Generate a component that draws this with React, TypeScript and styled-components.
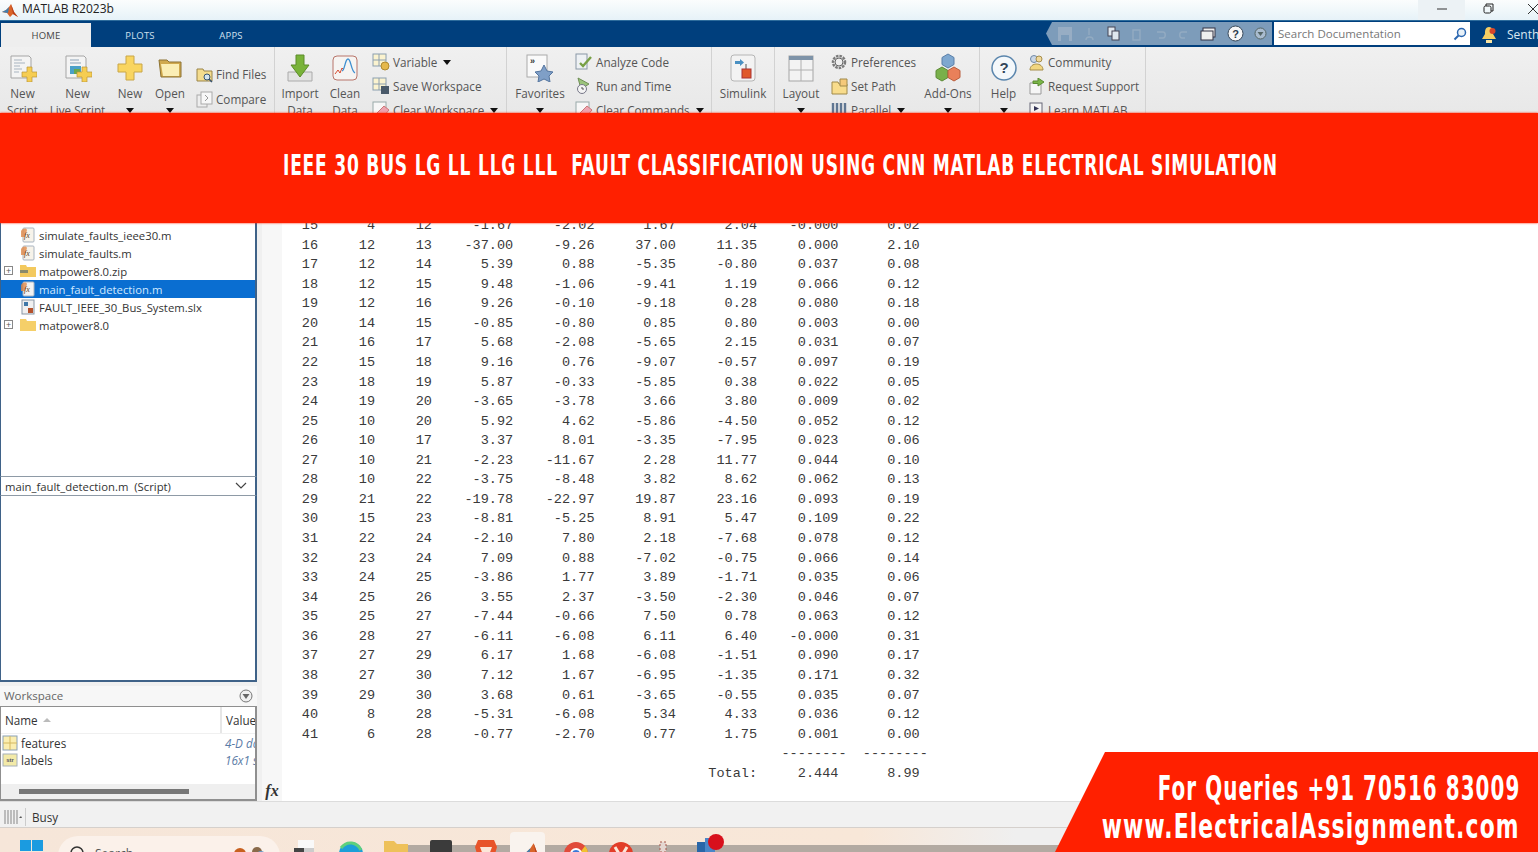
import React from "react";
import styled, { createGlobalStyle } from "styled-components";

const Global = createGlobalStyle`
  html, body { margin: 0; padding: 0; background: #f0f0f0; }
  #root { width: 1538px; height: 852px; overflow: hidden; }
  * { box-sizing: border-box; }
`;

const UI = `"Open Sans", "Noto Sans", sans-serif`;

const Page = styled.div`
  position: relative;
  width: 1538px;
  height: 852px;
  overflow: hidden;
  display: flex;
  flex-direction: column;
  font-family: ${UI};
  background: #f0f0f0;
`;

/* title bar */
const TitleBar = styled.div`
  height: 20px;
  flex: none;
  display: flex;
  align-items: center;
  padding-left: 2px;
  background: linear-gradient(#fbfdfd, #e6f2f8);
  color: #222;
  font-size: 12px;
`;
const TitleText = styled.span`
  margin: 0 0 3px 4px;
  flex: 1;
`;
const WinButton = styled.div<{ $w: number; $shade?: boolean; $out?: number }>`
  width: ${(p) => p.$w}px;
  height: 20px;
  flex: none;
  margin-right: ${(p) => -(p.$out || 0)}px;
  padding-bottom: 3px;
  display: flex;
  align-items: center;
  justify-content: center;
  background: ${(p) => (p.$shade ? "#ecf2f5" : "transparent")};
`;

/* tab strip */
const TabStrip = styled.div`
  height: 27px;
  flex: none;
  display: flex;
  align-items: flex-end;
  background: #003f7d;
  border-top: 1px solid #2d6c9c;
  padding-left: 1px;
`;
const Tab = styled.div<{ $active?: boolean; $w: number }>`
  width: ${(p) => p.$w}px;
  height: 24px;
  display: flex;
  align-items: center;
  justify-content: center;
  font-size: 9.5px;
  letter-spacing: 0.2px;
  color: ${(p) => (p.$active ? "#444" : "#cfe0ee")};
  background: ${(p) => (p.$active ? "#eeeeee" : "transparent")};
`;
const QuickBar = styled.div`
  margin-left: auto;
  height: 23px;
  margin-bottom: 2px;
  width: 226px;
  display: flex;
  align-items: center;
  gap: 10.4px;
  padding-left: 11px;
  background: #7d9cba;
  clip-path: polygon(6px 0, 100% 0, 100% 100%, 6px 100%, 0 50%);
`;
const SearchBox = styled.div`
  width: 196px;
  height: 23px;
  margin: 0 0 2px 2px;
  background: #fff;
  color: #777;
  font-size: 11.5px;
  display: flex;
  align-items: center;
  justify-content: space-between;
  padding: 0 3px 0 4px;
`;
const Bell = styled.div`
  width: 37px;
  height: 25px;
  display: flex;
  align-items: center;
  justify-content: center;
`;
const UserName = styled.span`
  width: 31px;
  height: 25px;
  line-height: 25px;
  overflow: hidden;
  color: #dbe8f2;
  font-size: 12px;
  white-space: nowrap;
`;

/* ribbon */
const Ribbon = styled.div`
  height: 66px;
  flex: none;
  overflow: hidden;
  display: flex;
  background: linear-gradient(#f0f0f0, #e8e8e8);
  color: #555;
  font-size: 11.7px;
`;
const RibbonGroup = styled.div<{ $w: number }>`
  width: ${(p) => p.$w}px;
  flex: none;
  height: 100%;
  display: flex;
  border-right: 1px solid #d2d2d2;
`;
const PlainGroup = styled(RibbonGroup)`
  border-right: none;
`;
const BigButton = styled.div<{ $w: number }>`
  width: ${(p) => p.$w}px;
  flex: none;
  display: flex;
  flex-direction: column;
  align-items: center;
  padding-top: 7px;
  line-height: 17px;
  text-align: center;
  white-space: nowrap;
`;
const BigIcon = styled.div`
  height: 28px;
  flex: none;
  margin-bottom: 3px;
  display: flex;
  align-items: center;
`;
const BigLabel = styled.span`
  flex: none;
`;
const Caret = styled.span`
  display: inline-block;
  width: 0;
  height: 0;
  border-left: 4px solid transparent;
  border-right: 4px solid transparent;
  border-top: 5px solid #111;
  margin: 0 3px;
  vertical-align: 2px;
`;
const SortCaret = styled.span`
  display: inline-block;
  width: 0;
  height: 0;
  border-left: 4px solid transparent;
  border-right: 4px solid transparent;
  border-bottom: 4px solid #bbb;
  margin-left: 1px;
`;
const SmallStack = styled.div<{ $w: number; $top: number; $gap: number }>`
  width: ${(p) => p.$w}px;
  flex: none;
  display: flex;
  flex-direction: column;
  padding-top: ${(p) => p.$top}px;
  gap: ${(p) => p.$gap}px;
`;
const SmallRow = styled.div`
  height: 18px;
  flex: none;
  display: flex;
  align-items: center;
  gap: 3px;
  white-space: nowrap;
`;
const SmallIconBox = styled.div`
  width: 18px;
  height: 18px;
  flex: none;
  display: flex;
  align-items: center;
  justify-content: center;
`;
const Spacer = styled.div<{ $w: number }>`
  width: ${(p) => p.$w}px;
  flex: none;
`;

/* body */
const Body = styled.div`
  height: 688px;
  flex: none;
  display: flex;
`;
const LeftColumn = styled.div`
  width: 257px;
  flex: none;
  display: flex;
  flex-direction: column;
`;
const Tree = styled.div`
  height: 363px;
  flex: none;
  padding-top: 113px;
  background: #fff;
  border-left: 1px solid #3f6288;
  border-right: 2px solid #3f6288;
  color: #333;
  font-size: 11.3px;
`;
const TreeRow = styled.div<{ $selected?: boolean }>`
  height: 18px;
  display: flex;
  align-items: center;
  background: ${(p) => (p.$selected ? "#0a6ed1" : "transparent")};
  color: ${(p) => (p.$selected ? "#cfe8ff" : "#333")};
`;
const Expander = styled.div`
  width: 9px;
  height: 9px;
  margin: 0 0 2px 3px;
  border: 1px solid #888;
  background: #fff;
  color: #555;
  font-size: 9px;
  line-height: 7px;
  text-align: center;
  flex: none;
`;
const TreeGutter = styled.div<{ $w: number }>`
  width: ${(p) => p.$w}px;
  flex: none;
`;
const TreeIcon = styled.div`
  width: 16px;
  height: 16px;
  margin-right: 3px;
  flex: none;
  display: flex;
  align-items: center;
  justify-content: center;
`;
const DetailHead = styled.div`
  height: 20px;
  flex: none;
  background: #fff;
  border: 1px solid #8e9aa6;
  border-right: 2px solid #3f6288;
  border-left: 1px solid #3f6288;
  display: flex;
  align-items: center;
  justify-content: space-between;
  padding: 0 8px 0 4px;
  font-size: 11.3px;
  color: #333;
`;
const DetailBody = styled.div`
  height: 186px;
  flex: none;
  background: #fff;
  border-left: 1px solid #3f6288;
  border-right: 2px solid #3f6288;
  border-bottom: 2px solid #3f6288;
`;
const WorkspaceHead = styled.div`
  height: 20px;
  margin-top: 4px;
  flex: none;
  background: #f7f7f7;
  color: #666;
  font-size: 11.5px;
  display: flex;
  align-items: center;
  justify-content: space-between;
  padding: 0 4px 1px 4px;
`;
const WorkspaceBody = styled.div`
  height: 95px;
  flex: none;
  background: #fff;
  border: 1px solid #8f8f8f;
  border-bottom-width: 2px;
  border-right-width: 2px;
  display: flex;
  flex-direction: column;
  font-size: 11.7px;
  color: #333;
`;
const WsHeadRow = styled.div`
  height: 27px;
  flex: none;
  display: flex;
  align-items: center;
  border-bottom: 1px solid #f0f0f0;
`;
const WsNameCell = styled.div`
  width: 221px;
  height: 100%;
  padding-left: 4px;
  display: flex;
  align-items: center;
  gap: 4px;
  border-right: 2px solid #e6e6e6;
`;
const WsValueCell = styled.div`
  flex: 1;
  padding-left: 4px;
  overflow: hidden;
  white-space: nowrap;
`;
const WsRow = styled.div`
  height: 17px;
  flex: none;
  display: flex;
  align-items: center;
`;
const WsName = styled.div`
  width: 221px;
  display: flex;
  align-items: center;
  gap: 3px;
  padding-left: 1px;
`;
const WsValue = styled.div`
  flex: 1;
  padding-left: 3px;
  overflow: hidden;
  white-space: nowrap;
  font-style: italic;
  color: #5a7ba6;
`;
const ScrollTrack = styled.div`
  margin-top: auto;
  height: 15px;
  flex: none;
  background: #efefef;
  display: flex;
  align-items: center;
  padding-left: 18px;
`;
const ScrollThumb = styled.div`
  width: 170px;
  height: 5px;
  background: #777;
`;

const ConsoleWrap = styled.div`
  flex: 1;
  margin-left: 5px;
  display: flex;
  background: #fff;
`;
const FxGutter = styled.div`
  width: 20px;
  flex: none;
  background: #f7f7f7;
  display: flex;
  align-items: flex-end;
  justify-content: center;
  padding-bottom: 1px;
  font-family: "Liberation Serif", serif;
  font-style: italic;
  font-weight: 700;
  font-size: 16px;
  color: #333;
`;
const ConsoleText = styled.pre`
  margin: 0;
  padding: 103px 0 0 3.6px;
  font-family: "Liberation Mono", monospace;
  font-size: 13.56px;
  line-height: 19.56px;
  color: #3a3a3a;
`;

/* status and taskbar */
const StatusBar = styled.div`
  height: 27px;
  flex: none;
  display: flex;
  align-items: center;
  padding: 4px 0 0 4px;
  background: #f1f1f1;
  border-top: 1px solid #dcdcdc;
  border-bottom: 1px solid #d5d0cc;
  color: #333;
  font-size: 11.7px;
`;
const StatusDivider = styled.div`
  width: 1px;
  height: 18px;
  margin: 0 6px 0 3px;
  background: #ccc;
`;
const Taskbar = styled.div`
  position: relative;
  flex: 1;
  overflow: hidden;
  background: linear-gradient(90deg, #f6e6d9, #f8e7d8 56%, #efefef 66%);
`;
const TaskRow = styled.div`
  position: relative;
  height: 100%;
  display: flex;
  align-items: flex-start;
  padding: 12px 0 0 20px;
`;
const SearchPill = styled.div`
  width: 222px;
  height: 40px;
  margin: -4px 3px 0 15px;
  border-radius: 20px;
  background: #fbf1ea;
  display: flex;
  align-items: flex-start;
  padding: 9px 14px 0 11px;
  gap: 10px;
  color: #555;
  font-size: 12px;
  flex: none;
`;
const SearchWord = styled.span`
  flex: 1;
`;
const TaskIcon = styled.div<{ $lift?: boolean }>`
  width: 45px;
  height: 30px;
  margin-top: ${(p) => (p.$lift ? "-6px" : "0")};
  flex: none;
  display: flex;
  justify-content: center;
`;
const ActiveTaskIcon = styled.div`
  width: 35px;
  height: 34px;
  margin: -8px 8px 0 2px;
  padding: 8px 0 0 0;
  flex: none;
  display: flex;
  justify-content: flex-end;
  background: #f9f3ee;
  border-radius: 4px;
`;
const NewsStrip = styled.div`
  position: absolute;
  left: 400px;
  right: 0;
  bottom: 0;
  height: 7px;
  background: #b3aaa2;
`;

/* overlays */
const Banner = styled.div`
  position: absolute;
  left: 0;
  right: 0;
  top: 113px;
  height: 110px;
  background: #ff2000;
  box-shadow: 0 0 2px #ff2000;
  color: #fff;
  display: flex;
  align-items: center;
  justify-content: center;
`;
const BannerText = styled.h1`
  margin: 0 0 6px 0;
  font-family: "DejaVu Sans Condensed", "DejaVu Sans", "Liberation Sans", sans-serif;
  font-size: 29px;
  font-weight: 700;
  white-space: pre;
  letter-spacing: 1.2px;
  transform: translateX(11px) scaleX(0.655);
`;
const Corner = styled.div`
  position: absolute;
  right: 0;
  bottom: 0;
  width: 483px;
  height: 100px;
  background: #ff2000;
  clip-path: polygon(50px 0, 100% 0, 100% 100%, 0 100%);
  color: #fff;
  display: flex;
  flex-direction: column;
  align-items: flex-end;
  padding: 18px 18px 0 0;
  font-family: "DejaVu Sans Condensed", "DejaVu Sans", "Liberation Sans", sans-serif;
  font-weight: 700;
  white-space: nowrap;
`;
const CornerLine = styled.div<{ $sx: number }>`
  font-size: 33px;
  line-height: 38px;
  letter-spacing: 1.6px;
  transform-origin: right center;
  transform: scaleX(${(p) => p.$sx});
`;

/* icons */
const Doc = ({ live }: { live?: boolean }) => (
  <svg width="28" height="28" viewBox="0 0 28 28">
    <path d="M2 2h18l2 2v20H2z" fill="#f4f4f4" stroke="#a5a5a5" />
    {live ? (
      <>
        <path d="M6 6h9M6 9h11" stroke="#8fa4b8" />
        <rect x="6" y="12" width="11" height="8" fill="#4aa0c8" />
        <rect x="10" y="15" width="6" height="5" fill="#6aa84f" />
      </>
    ) : (
      <path d="M5 6h8M5 9h11M5 12h6M5 15h8M5 18h5" stroke="#a8b4c0" />
    )}
    <path d="M18 13h5v5h5v5h-5v5h-5v-5h-5v-5h5z" fill="#f6cd52" stroke="#b9973a" strokeWidth=".7" />
  </svg>
);
const BigPlus = () => (
  <svg width="26" height="26" viewBox="0 0 26 26">
    <path d="M9 1h8v8h8v8h-8v8H9v-8H1V9h8z" fill="#f9d560" stroke="#c9a648" />
  </svg>
);
const BigFolder = () => (
  <svg width="24" height="22" viewBox="0 0 24 22">
    <path d="M1 3h8l2 2h12v15H3z" fill="#d0a94e" stroke="#8d7334" />
    <path d="M3 7h18v12H5z" fill="#fbeeb5" />
  </svg>
);
const FindIcon = () => (
  <svg width="17" height="17" viewBox="0 0 17 17">
    <path d="M1 3h6l1 2h8v10H1z" fill="#f4dc8e" stroke="#9a8449" />
    <circle cx="11" cy="11" r="3" fill="#d5e5f0" stroke="#38536f" />
    <path d="M13 13l3 3" stroke="#38536f" strokeWidth="1.5" />
  </svg>
);
const CompareIcon = () => (
  <svg width="17" height="17" viewBox="0 0 17 17">
    <rect x="1" y="4" width="10" height="12" fill="#eee" stroke="#aaa" />
    <rect x="5" y="1" width="11" height="12" fill="#f7f7f7" stroke="#aaa" />
    <path d="M9 4l3 3-3 3" fill="none" stroke="#999" />
  </svg>
);
const ImportIcon = () => (
  <svg width="26" height="28" viewBox="0 0 26 28">
    <path d="M1 18h24v9H1z" fill="#e3e3e3" stroke="#aaa" />
    <path d="M9 1h8v10h5L13 23 4 11h5z" fill="#79b339" stroke="#5d8b2a" />
  </svg>
);
const CleanIcon = () => (
  <svg width="26" height="26" viewBox="0 0 26 26">
    <rect x="1" y="1" width="24" height="24" rx="4" fill="#f6f4f2" stroke="#b8756a" />
    <path d="M3 19l3-4 2 3 2-5 2 2" fill="none" stroke="#d84b2f" />
    <path d="M10 16c3-1 3-12 6-12s3 12 7 14" fill="none" stroke="#3f8fd0" strokeWidth="1.3" />
  </svg>
);
const GridIcon = ({ badge }: { badge: string }) => (
  <svg width="18" height="18" viewBox="0 0 18 18">
    <rect x="1" y="1" width="13" height="12" fill="#fbf3cf" stroke="#8c9fb0" />
    <path d="M1 7h13M7 1v12" stroke="#8c9fb0" />
    {badge === "plus" && <circle cx="13" cy="13" r="4" fill="#e5b84a" stroke="#b08a2f" />}
    {badge === "save" && <rect x="9" y="9" width="8" height="8" fill="#4a5a6a" />}
  </svg>
);
const EraseIcon = () => (
  <svg width="18" height="18" viewBox="0 0 18 18">
    <rect x="1" y="1" width="13" height="14" fill="#f7f7f7" stroke="#9aa" />
    <path d="M5 12l7-7 5 4-6 7H7z" fill="#eda4b0" stroke="#c77" />
  </svg>
);
const FavIcon = () => (
  <svg width="28" height="28" viewBox="0 0 28 28">
    <rect x="1" y="1" width="20" height="22" fill="#fafafa" stroke="#aaa" />
    <text x="4" y="10" fontSize="9" fontWeight="700" fill="#333" fontFamily="Liberation Sans">»</text>
    <path d="M18 11l3 6 6 1-4 4 1 6-6-3-6 3 1-6-4-4 6-1z" fill="#7f9fc7" stroke="#54759f" />
  </svg>
);
const AnalyzeIcon = () => (
  <svg width="18" height="18" viewBox="0 0 18 18">
    <rect x="1" y="1" width="11" height="15" fill="#eef1f4" stroke="#8a98a6" />
    <path d="M5 10l3 3 8-9" fill="none" stroke="#78a045" strokeWidth="2.4" />
  </svg>
);
const RunTimeIcon = () => (
  <svg width="18" height="18" viewBox="0 0 18 18">
    <path d="M3 1l11 6-8 5z" fill="#9cc47c" stroke="#6f8f55" />
    <circle cx="7" cy="12" r="4.5" fill="#f4f4f4" stroke="#778" />
    <path d="M7 10v2h2" fill="none" stroke="#555" />
  </svg>
);
const SimulinkIcon = () => (
  <svg width="26" height="28" viewBox="0 0 26 28">
    <rect x="1" y="1" width="24" height="26" rx="3" fill="#f3f3f3" stroke="#b5b5b5" />
    <path d="M5 7h5v-2l4 3.500-4 3.500v-2H5z" fill="#4a90c2" />
    <path d="M16 10v5" stroke="#555" />
    <rect x="12" y="15" width="9" height="9" fill="#e0592a" stroke="#a33" />
  </svg>
);
const LayoutIcon = () => (
  <svg width="26" height="28" viewBox="0 0 26 28">
    <rect x="1" y="2" width="24" height="25" fill="#f3f3f3" stroke="#a5a5a5" />
    <rect x="1" y="2" width="24" height="4" fill="#7e93a8" />
    <path d="M13 6v21M1 16h24" stroke="#b0b0b0" />
  </svg>
);
const GearIcon = () => (
  <svg width="16" height="16" viewBox="0 0 16 16">
    <circle cx="8" cy="8" r="6" fill="none" stroke="#7a7a7a" strokeWidth="2.5" strokeDasharray="2.5 1" />
    <circle cx="8" cy="8" r="4" fill="#eee" stroke="#666" />
  </svg>
);
const PathIcon = () => (
  <svg width="17" height="17" viewBox="0 0 17 17">
    <path d="M1 4h6l1 2h8v10H1z" fill="#f8dc8c" stroke="#a08a4a" />
    <path d="M9 1h7v7H9z" fill="#f5c97a" stroke="#a08a4a" />
  </svg>
);
const ParallelIcon = () => (
  <svg width="17" height="17" viewBox="0 0 17 17">
    <path d="M2 1v16M6 1v16M10 1v16M14 1v16" stroke="#5f7692" strokeWidth="2.4" />
  </svg>
);
const AddOnsIcon = () => (
  <svg width="28" height="30" viewBox="0 0 28 30">
    <path d="M14 1l6 3.500v7L14 15l-6-3.500v-7z" fill="#7fa8d0" stroke="#5a7fa8" />
    <path d="M8 14l6 3.500v7L8 28l-6-3.500v-7z" fill="#79b04a" stroke="#5c8a36" />
    <path d="M20 14l6 3.500v7L20 28l-6-3.500v-7z" fill="#e9805a" stroke="#b95d3c" />
  </svg>
);
const HelpIcon = () => (
  <svg width="26" height="26" viewBox="0 0 26 26">
    <circle cx="13" cy="13" r="12" fill="#f4f8fb" stroke="#5b86ad" strokeWidth="1.5" />
    <text x="13" y="18" textAnchor="middle" fontSize="15" fontWeight="700" fill="#33465a" fontFamily="Liberation Sans">?</text>
  </svg>
);
const CommunityIcon = () => (
  <svg width="17" height="17" viewBox="0 0 17 17">
    <circle cx="6" cy="5" r="3.500" fill="#cbd7e6" stroke="#6f88a6" />
    <circle cx="11" cy="5" r="3" fill="#f1d99b" stroke="#a68d4a" />
    <path d="M2 16c0-8 13-8 13 0z" fill="#f2d680" stroke="#a68d4a" />
  </svg>
);
const SupportIcon = () => (
  <svg width="17" height="17" viewBox="0 0 17 17">
    <path d="M2 5h11v11H2z" fill="#f6f6f6" stroke="#999" />
    <path d="M5 3h5V0l6 4-6 4V5.500H5z" fill="#7ab648" stroke="#5a8a30" />
  </svg>
);
const LearnIcon = () => (
  <svg width="17" height="17" viewBox="0 0 17 17">
    <rect x="2" y="1" width="12" height="11" fill="#f5f5f5" stroke="#667" />
    <path d="M6 4l5 2.500L6 9z" fill="#335" />
    <path d="M1 14h14" stroke="#667" strokeWidth="2" />
  </svg>
);
const MatlabLogo = ({ s = 16 }: { s?: number }) => (
  <svg width={s} height={s} viewBox="0 0 16 16">
    <path d="M0 10l4-2 3-3 2-3 3 8 4 5-5-3-3 3-3-4z" fill="#d9642a" />
    <path d="M0 10l4-2 3-3-1 6z" fill="#3f7fb0" />
    <path d="M9 2l3 8 4 5-5-3z" fill="#b8401c" />
  </svg>
);
const FileFx = ({ dark }: { dark?: boolean }) => (
  <svg width="16" height="16" viewBox="0 0 16 16">
    <rect x="3" y="1" width="11" height="14" rx="1" fill={dark ? "#f2f2f2" : "#f7f3ea"} stroke="#a9b4c0" />
    <path d="M1 4c2-3 5-3 6-1L5 10H1z" fill="#e08a4a" opacity=".8" />
    <text x="4" y="11" fontSize="8" fontStyle="italic" fill="#5a3a1a" fontFamily="Liberation Serif">fx</text>
  </svg>
);
const SlxIcon = () => (
  <svg width="16" height="16" viewBox="0 0 16 16">
    <rect x="2" y="1" width="12" height="14" fill="#f0f0f0" stroke="#8a97a5" />
    <path d="M4 3h4v4H4z" fill="#3f78a8" />
    <rect x="8" y="9" width="5" height="5" fill="#b5522c" />
  </svg>
);
const ZipFolder = () => (
  <svg width="16" height="14" viewBox="0 0 16 14">
    <path d="M0 1h6l1 2h9v10H0z" fill="#f3c95e" />
    <path d="M0 6h8v3H0z" fill="#8a8a6a" />
  </svg>
);
const Folder = () => (
  <svg width="16" height="14" viewBox="0 0 16 14">
    <path d="M0 1h6l1 2h9v10H0z" fill="#f5cf69" />
  </svg>
);
const Chevron = () => (
  <svg width="12" height="8" viewBox="0 0 12 8">
    <path d="M1 1l5 5 5-5" fill="none" stroke="#444" strokeWidth="1.2" />
  </svg>
);
const CircleDown = () => (
  <svg width="14" height="14" viewBox="0 0 14 14">
    <circle cx="7" cy="7" r="6" fill="#f0f0f0" stroke="#777" />
    <path d="M3.500 5h7L7 10z" fill="#666" />
  </svg>
);
const VarGrid = () => (
  <svg width="16" height="16" viewBox="0 0 16 16">
    <rect x="1" y="1" width="14" height="14" fill="#fbeeb0" stroke="#8aa0b5" />
    <path d="M1 8h14M8 1v14" stroke="#d4b860" />
  </svg>
);
const StrIcon = () => (
  <svg width="16" height="14" viewBox="0 0 16 14">
    <rect x="1" y="1" width="14" height="12" fill="#f3eaa8" stroke="#a6b0b8" />
    <text x="8" y="9" textAnchor="middle" fontSize="6" fontWeight="700" fill="#556" fontFamily="Liberation Sans">str</text>
  </svg>
);
const QatSave = () => (
  <svg width="16" height="16" viewBox="0 0 16 16"><path d="M1 1h14v14H1z" fill="#97adc4" /><rect x="4" y="9" width="8" height="6" fill="#7d9cba" /></svg>
);
const QatGlyph = ({ d }: { d: string }) => (
  <svg width="13" height="14" viewBox="0 0 13 14"><path d={d} fill="none" stroke="#93abc2" strokeWidth="1.4" /></svg>
);
const QatCopy = () => (
  <svg width="13" height="15" viewBox="0 0 13 15"><rect x="1" y="1" width="7" height="9" fill="#dfe7ee" stroke="#445" /><rect x="5" y="5" width="7" height="9" fill="#dfe7ee" stroke="#445" /></svg>
);
const QatWin = () => (
  <svg width="16" height="14" viewBox="0 0 16 14"><rect x="3" y="1" width="12" height="9" fill="#eee" stroke="#334" /><rect x="1" y="4" width="12" height="9" fill="#eee" stroke="#334" /></svg>
);
const QatHelp = () => (
  <svg width="17" height="17" viewBox="0 0 17 17"><circle cx="8.500" cy="8.500" r="7.500" fill="#f7f7f7" stroke="#3a4a5a" /><text x="8.500" y="12.500" textAnchor="middle" fontSize="11" fontWeight="700" fill="#2a3a4a" fontFamily="Liberation Sans">?</text></svg>
);
const QatDown = () => (
  <svg width="13" height="13" viewBox="0 0 13 13"><circle cx="6.500" cy="6.500" r="5.500" fill="#a9bccf" stroke="#566" /><path d="M3.500 5h6l-3 4z" fill="#566" /></svg>
);
const SearchGlass = () => (
  <svg width="14" height="14" viewBox="0 0 14 14"><circle cx="8.500" cy="5.500" r="4" fill="#e8f1f8" stroke="#2a66b0" strokeWidth="1.5" /><path d="M5.500 8.500L1.500 12.500" stroke="#2a66b0" strokeWidth="2" /></svg>
);
const BellIcon = () => (
  <svg width="16" height="18" viewBox="0 0 16 18"><path d="M8 1c4 0 4 4 4 7l3 5H1l3-5c0-3 0-7 4-7z" fill="#f6cf63" /><rect x="5" y="14" width="6" height="3" fill="#f9e3a0" /><circle cx="11.500" cy="5" r="3" fill="#d8452a" /></svg>
);
const MinIcon = () => (<svg width="10" height="2" viewBox="0 0 10 2"><path d="M0 1h10" stroke="#333" /></svg>);
const RestoreIcon = () => (<svg width="11" height="11" viewBox="0 0 11 11"><rect x="1" y="3" width="7" height="7" rx="1.500" fill="none" stroke="#222" /><path d="M3 3V1h7v7H8" fill="none" stroke="#222" /></svg>);
const CloseIcon = () => (<svg width="10" height="10" viewBox="0 0 10 10"><path d="M0 0l10 10M10 0L0 10" stroke="#333" /></svg>);
const BusyIcon = () => (<svg width="18" height="16" viewBox="0 0 18 16"><path d="M1 1v14M4 1v14M7 1v14M10 1v14M13 1v14" stroke="#aaa" strokeWidth="1.500" /><path d="M15 9l2-2 1 2z" fill="#555" /></svg>);
const WinLogo = () => (<svg width="23" height="23" viewBox="0 0 23 23"><path d="M0 0h11v11H0zM12 0h11v11H12zM0 12h11v11H0zM12 12h11v11H12z" fill="#1b9be0" /></svg>);
const SearchRing = () => (<svg width="16" height="16" viewBox="0 0 16 16"><circle cx="8" cy="8" r="6" fill="none" stroke="#333" strokeWidth="1.500" /></svg>);
const Emoji = () => (<svg width="34" height="16" viewBox="0 0 34 16"><circle cx="8" cy="9" r="6" fill="#c8601f" /><circle cx="25" cy="7" r="5" fill="#8a6a4a" /><circle cx="29" cy="10" r="4" fill="#6a9ac8" /></svg>);

const TaskGlyph = ({ kind }: { kind: string }) => {
  const common = { width: 28, height: 28, viewBox: "0 0 28 28" };
  switch (kind) {
    case "widgets":
      return <svg {...common}><rect x="6" y="0" width="16" height="10" fill="#f9f9f9" /><rect x="2" y="8" width="10" height="16" fill="#444" /><rect x="12" y="8" width="10" height="16" fill="#ccc" /></svg>;
    case "edge":
      return <svg {...common}><circle cx="14" cy="14" r="12" fill="#1d9fd8" /><circle cx="14" cy="16" r="4" fill="#f2e3d8" /><path d="M4 8c6-8 16-6 20 2" stroke="#5ed07c" strokeWidth="3" fill="none" /></svg>;
    case "folder":
      return <svg {...common}><path d="M2 1h10l3 3h11v22H2z" fill="#eec15a" /></svg>;
    case "store":
      return <svg {...common}><rect x="3" y="0" width="22" height="26" rx="2" fill="#3b3b3b" /></svg>;
    case "brave":
      return <svg {...common}><path d="M6 0h16l3 7-4 14-7 4-7-4L3 7z" fill="#e8542a" /><path d="M8 7h12l-3 8h-6z" fill="#fbe7d8" /></svg>;
    case "matlab":
      return <MatlabLogo s={26} />;
    case "chrome":
      return <svg {...common}><circle cx="14" cy="14" r="12" fill="#e14b3a" /><path d="M2 14a12 12 0 0 0 12 12l6-10z" fill="#4aa85a" /><path d="M26 14a12 12 0 0 0-3-8l-6 8z" fill="#f2c230" /><circle cx="14" cy="14" r="5" fill="#3b78d8" stroke="#fff" strokeWidth="2" /></svg>;
    case "vivaldi":
      return <svg {...common}><circle cx="14" cy="14" r="12" fill="#e23d28" /><path d="M8 7l6 10 6-10" fill="none" stroke="#fbe7d8" strokeWidth="3" /></svg>;
    case "tools":
      return <svg {...common}><path d="M8 2h6v10H8zM6 14h16v12H6z" fill="#e4d6d0" stroke="#a8564a" strokeDasharray="2 2" /></svg>;
    case "rec":
      return <svg {...common}><rect x="0" y="8" width="8" height="18" fill="#2966a8" /><rect x="8" y="4" width="10" height="22" fill="#4a86c8" /><circle cx="19" cy="8" r="8" fill="#d8101c" /></svg>;
    default:
      return null;
  }
};

const rows: (string | number)[][] = [
  [15, 4, 12, "-1.67", "-2.02", "1.67", "2.04", "-0.000", "0.02"],
  [16, 12, 13, "-37.00", "-9.26", "37.00", "11.35", "0.000", "2.10"],
  [17, 12, 14, "5.39", "0.88", "-5.35", "-0.80", "0.037", "0.08"],
  [18, 12, 15, "9.48", "-1.06", "-9.41", "1.19", "0.066", "0.12"],
  [19, 12, 16, "9.26", "-0.10", "-9.18", "0.28", "0.080", "0.18"],
  [20, 14, 15, "-0.85", "-0.80", "0.85", "0.80", "0.003", "0.00"],
  [21, 16, 17, "5.68", "-2.08", "-5.65", "2.15", "0.031", "0.07"],
  [22, 15, 18, "9.16", "0.76", "-9.07", "-0.57", "0.097", "0.19"],
  [23, 18, 19, "5.87", "-0.33", "-5.85", "0.38", "0.022", "0.05"],
  [24, 19, 20, "-3.65", "-3.78", "3.66", "3.80", "0.009", "0.02"],
  [25, 10, 20, "5.92", "4.62", "-5.86", "-4.50", "0.052", "0.12"],
  [26, 10, 17, "3.37", "8.01", "-3.35", "-7.95", "0.023", "0.06"],
  [27, 10, 21, "-2.23", "-11.67", "2.28", "11.77", "0.044", "0.10"],
  [28, 10, 22, "-3.75", "-8.48", "3.82", "8.62", "0.062", "0.13"],
  [29, 21, 22, "-19.78", "-22.97", "19.87", "23.16", "0.093", "0.19"],
  [30, 15, 23, "-8.81", "-5.25", "8.91", "5.47", "0.109", "0.22"],
  [31, 22, 24, "-2.10", "7.80", "2.18", "-7.68", "0.078", "0.12"],
  [32, 23, 24, "7.09", "0.88", "-7.02", "-0.75", "0.066", "0.14"],
  [33, 24, 25, "-3.86", "1.77", "3.89", "-1.71", "0.035", "0.06"],
  [34, 25, 26, "3.55", "2.37", "-3.50", "-2.30", "0.046", "0.07"],
  [35, 25, 27, "-7.44", "-0.66", "7.50", "0.78", "0.063", "0.12"],
  [36, 28, 27, "-6.11", "-6.08", "6.11", "6.40", "-0.000", "0.31"],
  [37, 27, 29, "6.17", "1.68", "-6.08", "-1.51", "0.090", "0.17"],
  [38, 27, 30, "7.12", "1.67", "-6.95", "-1.35", "0.171", "0.32"],
  [39, 29, 30, "3.68", "0.61", "-3.65", "-0.55", "0.035", "0.07"],
  [40, 8, 28, "-5.31", "-6.08", "5.34", "4.33", "0.036", "0.12"],
  [41, 6, 28, "-0.77", "-2.70", "0.77", "1.75", "0.001", "0.00"],
];
const widths = [4, 7, 7, 10, 10, 10, 10, 10, 10];
const fmt = (r: (string | number)[]) => r.map((c, i) => String(c).padStart(widths[i])).join("");
const consoleText =
  rows.map(fmt).join("\n") +
  "\n" + " ".repeat(61) + "--------  --------" +
  "\n" + " ".repeat(52) + "Total:" + "     2.444" + "      8.99";

const Big = ({ w, icon, l1, l2, caret }: { w: number; icon: React.ReactNode; l1: string; l2?: string; caret?: boolean }) => (
  <BigButton $w={w}>
    <BigIcon>{icon}</BigIcon>
    <BigLabel>{l1}</BigLabel>
    {l2 ? <BigLabel>{l2}</BigLabel> : caret ? <BigLabel><Caret /></BigLabel> : null}
  </BigButton>
);

const Small = ({ icon, children }: { icon: React.ReactNode; children: React.ReactNode }) => (
  <SmallRow>
    <SmallIconBox>{icon}</SmallIconBox>
    {children}
  </SmallRow>
);

export default function App() {
  return (
    <Page>
      <Global />
      <TitleBar>
        <MatlabLogo />
        <TitleText>MATLAB R2023b</TitleText>
        <WinButton $w={47} $shade><MinIcon /></WinButton>
        <WinButton $w={46}><RestoreIcon /></WinButton>
        <WinButton $w={44} $out={17}><CloseIcon /></WinButton>
      </TitleBar>
      <TabStrip>
        <Tab $active $w={90}>HOME</Tab>
        <Tab $w={98}>PLOTS</Tab>
        <Tab $w={84}>APPS</Tab>
        <QuickBar>
          <QatSave />
          <QatGlyph d="M6 1v7M3 13c0-4 7-4 7 0" />
          <QatCopy />
          <QatGlyph d="M3 3h7v10H3z" />
          <QatGlyph d="M3 5h6c3 0 3 6 0 6H5" />
          <QatGlyph d="M10 5H5c-3 0-3 6 0 6h3" />
          <QatWin />
          <QatHelp />
          <QatDown />
        </QuickBar>
        <SearchBox>Search Documentation<SearchGlass /></SearchBox>
        <Bell><BellIcon /></Bell>
        <UserName>Senthil</UserName>
      </TabStrip>
      <Ribbon>
        <RibbonGroup $w={275}>
          <Big w={45} icon={<Doc />} l1="New" l2="Script" />
          <Big w={65} icon={<Doc live />} l1="New" l2="Live Script" />
          <Big w={40} icon={<BigPlus />} l1="New" caret />
          <Big w={40} icon={<BigFolder />} l1="Open" caret />
          <Spacer $w={5} />
          <SmallStack $w={76} $top={18} $gap={7}>
            <Small icon={<FindIcon />}>Find Files</Small>
            <Small icon={<CompareIcon />}>Compare</Small>
          </SmallStack>
        </RibbonGroup>
        <RibbonGroup $w={232}>
          <Big w={50} icon={<ImportIcon />} l1="Import" l2="Data" />
          <Big w={40} icon={<CleanIcon />} l1="Clean" l2="Data" />
          <Spacer $w={7} />
          <SmallStack $w={130} $top={6} $gap={6}>
            <Small icon={<GridIcon badge="plus" />}>Variable<Caret /></Small>
            <Small icon={<GridIcon badge="save" />}>Save Workspace</Small>
            <Small icon={<EraseIcon />}>Clear Workspace<Caret /></Small>
          </SmallStack>
        </RibbonGroup>
        <RibbonGroup $w={205}>
          <Big w={66} icon={<FavIcon />} l1="Favorites" caret />
          <Spacer $w={2} />
          <SmallStack $w={135} $top={6} $gap={6}>
            <Small icon={<AnalyzeIcon />}>Analyze Code</Small>
            <Small icon={<RunTimeIcon />}>Run and Time</Small>
            <Small icon={<EraseIcon />}>Clear Commands<Caret /></Small>
          </SmallStack>
        </RibbonGroup>
        <RibbonGroup $w={63}>
          <Big w={62} icon={<SimulinkIcon />} l1="Simulink" />
        </RibbonGroup>
        <RibbonGroup $w={205}>
          <Big w={52} icon={<LayoutIcon />} l1="Layout" caret />
          <Spacer $w={3} />
          <SmallStack $w={90} $top={6} $gap={6}>
            <Small icon={<GearIcon />}>Preferences</Small>
            <Small icon={<PathIcon />}>Set Path</Small>
            <Small icon={<ParallelIcon />}>Parallel<Caret /></Small>
          </SmallStack>
          <Big w={56} icon={<AddOnsIcon />} l1="Add-Ons" caret />
        </RibbonGroup>
        <RibbonGroup $w={166}>
          <Big w={47} icon={<HelpIcon />} l1="Help" caret />
          <SmallStack $w={118} $top={6} $gap={6}>
            <Small icon={<CommunityIcon />}>Community</Small>
            <Small icon={<SupportIcon />}>Request Support</Small>
            <Small icon={<LearnIcon />}>Learn MATLAB</Small>
          </SmallStack>
        </RibbonGroup>
        <PlainGroup $w={392} />
      </Ribbon>
      <Body>
        <LeftColumn>
          <Tree>
            <TreeRow><TreeGutter $w={19} /><TreeIcon><FileFx /></TreeIcon>simulate_faults_ieee30.m</TreeRow>
            <TreeRow><TreeGutter $w={19} /><TreeIcon><FileFx /></TreeIcon>simulate_faults.m</TreeRow>
            <TreeRow><Expander>+</Expander><TreeGutter $w={7} /><TreeIcon><ZipFolder /></TreeIcon>matpower8.0.zip</TreeRow>
            <TreeRow $selected><TreeGutter $w={19} /><TreeIcon><FileFx dark /></TreeIcon>main_fault_detection.m</TreeRow>
            <TreeRow><TreeGutter $w={19} /><TreeIcon><SlxIcon /></TreeIcon>FAULT_IEEE_30_Bus_System.slx</TreeRow>
            <TreeRow><Expander>+</Expander><TreeGutter $w={7} /><TreeIcon><Folder /></TreeIcon>matpower8.0</TreeRow>
          </Tree>
          <DetailHead>
            <span>main_fault_detection.m&nbsp;&nbsp;(Script)</span>
            <Chevron />
          </DetailHead>
          <DetailBody />
          <WorkspaceHead>Workspace<CircleDown /></WorkspaceHead>
          <WorkspaceBody>
            <WsHeadRow>
              <WsNameCell>Name<SortCaret /></WsNameCell>
              <WsValueCell>Value</WsValueCell>
            </WsHeadRow>
            <WsRow><WsName><VarGrid />features</WsName><WsValue>4-D double</WsValue></WsRow>
            <WsRow><WsName><StrIcon />labels</WsName><WsValue>16x1 string</WsValue></WsRow>
            <ScrollTrack><ScrollThumb /></ScrollTrack>
          </WorkspaceBody>
        </LeftColumn>
        <ConsoleWrap>
          <FxGutter>fx</FxGutter>
          <ConsoleText>{consoleText}</ConsoleText>
        </ConsoleWrap>
      </Body>
      <StatusBar>
        <BusyIcon />
        <StatusDivider />
        Busy
      </StatusBar>
      <Taskbar>
        <NewsStrip />
        <TaskRow>
          <WinLogo />
          <SearchPill>
            <SearchRing />
            <SearchWord>Search</SearchWord>
            <Emoji />
          </SearchPill>
          <TaskIcon><TaskGlyph kind="widgets" /></TaskIcon>
          <TaskIcon><TaskGlyph kind="edge" /></TaskIcon>
          <TaskIcon><TaskGlyph kind="folder" /></TaskIcon>
          <TaskIcon><TaskGlyph kind="store" /></TaskIcon>
          <TaskIcon><TaskGlyph kind="brave" /></TaskIcon>
          <ActiveTaskIcon><TaskGlyph kind="matlab" /></ActiveTaskIcon>
          <TaskIcon><TaskGlyph kind="chrome" /></TaskIcon>
          <TaskIcon><TaskGlyph kind="vivaldi" /></TaskIcon>
          <TaskIcon><TaskGlyph kind="tools" /></TaskIcon>
          <TaskIcon $lift><TaskGlyph kind="rec" /></TaskIcon>
        </TaskRow>
      </Taskbar>
      <Banner>
        <BannerText>IEEE 30 BUS LG LL LLG LLL  FAULT CLASSIFICATION USING CNN MATLAB ELECTRICAL SIMULATION</BannerText>
      </Banner>
      <Corner>
        <CornerLine $sx={0.671}>For Queries +91 70516 83009</CornerLine>
        <CornerLine $sx={0.735}>www.ElectricalAssignment.com</CornerLine>
      </Corner>
    </Page>
  );
}
